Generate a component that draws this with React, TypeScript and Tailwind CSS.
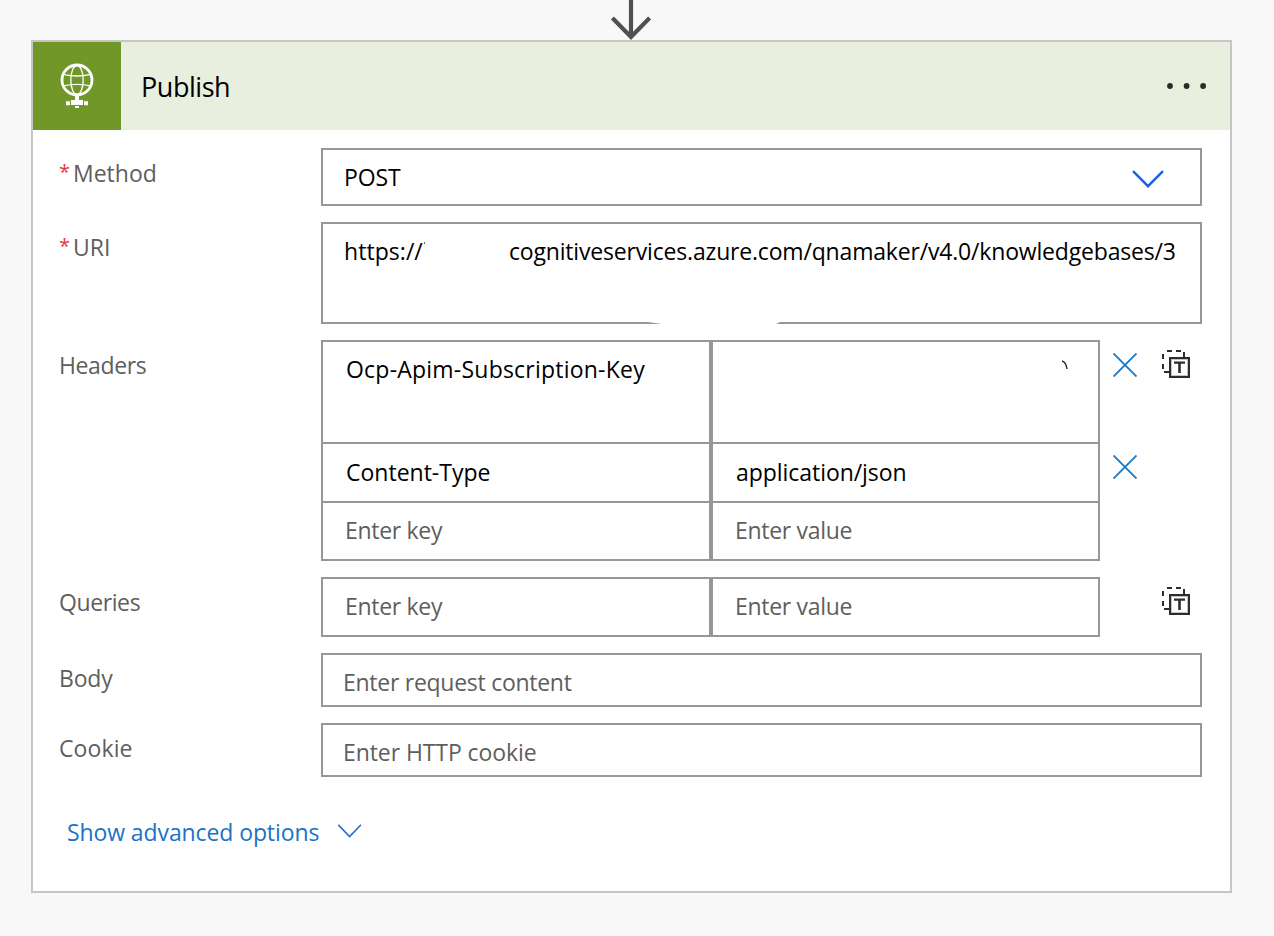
import type { ReactNode } from 'react';

function GlobeIcon() {
  return (
    <svg width="24" height="46" viewBox="0 0 24 46" fill="none" stroke="#fff" overflow="visible">
      <circle cx="12" cy="17" r="15" strokeWidth="2.8" />
      <ellipse cx="12" cy="17" rx="6.2" ry="14.5" strokeWidth="1.3" />
      <path d="M-1.7 11.4Q12 14.6 25.7 11.4M-1.7 22.8Q12 19.8 25.7 22.8" strokeWidth="1.3" />
      <path d="M10 33h4v4h-4zM6 37h12v5H6zM1 38.3h4v4H1zM19 38.3h4v4h-4zM10 43h4v2h-4z" fill="#fff" stroke="none" />
    </svg>
  );
}

function TextModeIcon() {
  return (
    <svg width="28" height="28" viewBox="0 0 28 28" fill="#2d2b2e" shapeRendering="crispEdges">
      <path d="M5 0h5v2H5zM14 0h5v2h-5zM21 2h2v5h-2zM0 4h2v5H0zM0 14h2v5H0zM2 21h5v2H2z" />
      <path d="M7 7h21v21H7z" />
      <path d="M9 9h17v17H9z" fill="#c3c3c5" />
      <path d="M10 10h15v15H10z" fill="#fff" />
      <path d="M12 11.6h11v2.2H12zM16.2 13h2.6v10h-2.6z" shapeRendering="auto" />
    </svg>
  );
}

function RemoveIcon() {
  return (
    <svg width="24" height="24" viewBox="0 0 24 24" fill="none" stroke="#1a7acb" strokeWidth="1.9">
      <path d="M.5.5l23 23M23.5.5l-23 23" />
    </svg>
  );
}

function Row({ label, required, height, tracking = 'tracking-normal', children }: { label: string; required?: boolean; height: string; tracking?: string; children: ReactNode }) {
  return (
    <div className={`flex items-start ${height}`}>
      <div className={`flex w-[288px] shrink-0 pl-[26px] pt-[9px] leading-8 text-[#605e5c] ${tracking}`}>
        {required && <span className="w-[14px] text-[20px] leading-[30px] text-[#e03a3e]">*</span>}
        {label}
      </div>
      {children}
    </div>
  );
}

const cell = 'border-[#979797] leading-8 whitespace-nowrap';

export default function App() {
  return (
    <main className="flex h-[936px] w-[1274px] flex-col overflow-hidden bg-[#f8f8f8] pl-[31px] font-['Open_Sans',sans-serif] text-[23px] text-black">
      <div className="h-10 shrink-0 pl-[580px]">
        <svg width="40" height="40" viewBox="0 0 40 40" fill="none" stroke="#505050" strokeWidth="4.2">
          <path d="M20 0v37M1.4 18L20 37l18.6-19" />
        </svg>
      </div>
      <section className="h-[853px] w-[1201px] shrink-0 border-2 border-[#c6c6c6] bg-white">
        <header className="flex h-[88px] items-center bg-[#e9efdf]">
          <div className="flex size-[88px] items-center justify-center bg-[#709727]">
            <GlobeIcon />
          </div>
          <h1 className="grow pl-5 pt-[2px] text-[27px] leading-9 tracking-[-0.45px]">Publish</h1>
          <svg className="mr-[22px]" width="42" height="8" viewBox="0 0 42 8" fill="#2b2b2b">
            <circle cx="4" cy="4" r="2.9" />
            <circle cx="20.6" cy="4" r="2.9" />
            <circle cx="37.1" cy="4" r="2.9" />
          </svg>
        </header>

        <div className="flex flex-col gap-4 pt-[18px]">
          <Row label="Method" required height="h-[58px]">
            <div className="flex h-[58px] w-[881px] items-center justify-between border-2 border-[#979797] pl-[21px] pr-[36px]">
              <span className="tracking-[-0.1px]">POST</span>
              <svg className="mt-[3px]" width="32" height="18" viewBox="0 0 32 18" fill="none" stroke="#1661e4" strokeWidth="2.4">
                <path d="M1 1.2l15 15 15-15" />
              </svg>
            </div>
          </Row>

          <Row label="URI" required height="h-[102px]">
            <div className="relative flex h-[102px] w-[881px] border-2 border-[#979797] pl-[21px] pt-[11px] leading-8 whitespace-nowrap">
              <span className="w-[165px] tracking-[0.05px]">https://</span>
              <span className="tracking-[-0.18px]">cognitiveservices.azure.com/qnamaker/v4.0/knowledgebases/3</span>
              <span className="absolute left-[101px] top-[18px] h-[2px] w-px bg-[#666]" />
              <svg className="absolute -bottom-[2px] left-[325px]" width="132" height="2" viewBox="0 0 132 2" fill="#fff">
                <path d="M0 0h132L128 2H14z" />
              </svg>
            </div>
          </Row>

          <Row label="Headers" height="h-[221px]" tracking="tracking-[-0.4px]">
            <div className="grid h-[221px] w-[779px] grid-cols-[390px_389px] grid-rows-[104px_59px_58px]">
              <div className={`${cell} border-2 pl-[23px] pt-[11px] tracking-[0.22px]`}>Ocp-Apim-Subscription-Key</div>
              <div className={`${cell} relative border-2`}>
                <svg className="absolute left-[349px] top-[18px]" width="6" height="10" viewBox="0 0 6 10" fill="none" stroke="#222" strokeWidth="1.4">
                  <path d="M0 1Q4 2 5 9" />
                </svg>
              </div>
              <div className={`${cell} border-x-2 border-b-2 pl-[23px] pt-[12px] tracking-normal`}>Content-Type</div>
              <div className={`${cell} border-x-2 border-b-2 pl-[23px] pt-[12px] tracking-[-0.05px]`}>application/json</div>
              <div className={`${cell} border-x-2 border-b-2 pl-[22px] pt-[11px] tracking-[-0.3px] text-[#605e5c]`}>Enter key</div>
              <div className={`${cell} border-x-2 border-b-2 pl-[22px] pt-[11px] tracking-[-0.3px] text-[#605e5c]`}>Enter value</div>
            </div>
            <div className="flex flex-col gap-[78px] pl-[13px] pt-[13px]">
              <RemoveIcon />
              <RemoveIcon />
            </div>
            <div className="pl-[25px] pt-[10px]">
              <TextModeIcon />
            </div>
          </Row>

          <Row label="Queries" height="h-[60px]" tracking="tracking-[-0.4px]">
            <div className="grid h-[60px] w-[779px] grid-cols-[390px_389px] tracking-[-0.3px] text-[#605e5c]">
              <div className={`${cell} border-2 pl-[22px] pt-[11px]`}>Enter key</div>
              <div className={`${cell} border-2 pl-[22px] pt-[11px]`}>Enter value</div>
            </div>
            <div className="pl-[62px] pt-[10px]">
              <TextModeIcon />
            </div>
          </Row>

          <Row label="Body" height="h-[54px]" tracking="tracking-[-0.2px]">
            <div className="h-[54px] w-[881px] border-2 border-[#979797] pl-5 pt-[11px] leading-8 tracking-[-0.27px] text-[#605e5c]">Enter request content</div>
          </Row>

          <Row label="Cookie" height="h-[54px]" tracking="tracking-[0.1px]">
            <div className="h-[54px] w-[881px] border-2 border-[#979797] pl-5 pt-[11px] leading-8 tracking-[-0.08px] text-[#605e5c]">Enter HTTP cookie</div>
          </Row>
        </div>

        <div className="flex items-start pl-[34px] pt-[39px] leading-8 text-[#1a73c6]">
          <span className="w-[271px] whitespace-nowrap tracking-[-0.1px]">Show advanced options</span>
          <svg className="mt-[8px]" width="24" height="14" viewBox="0 0 24 14" fill="none" stroke="#2a68d4" strokeWidth="1.6">
            <path d="M.3.8L11.6 12.5 23 .8" />
          </svg>
        </div>
      </section>
    </main>
  );
}
